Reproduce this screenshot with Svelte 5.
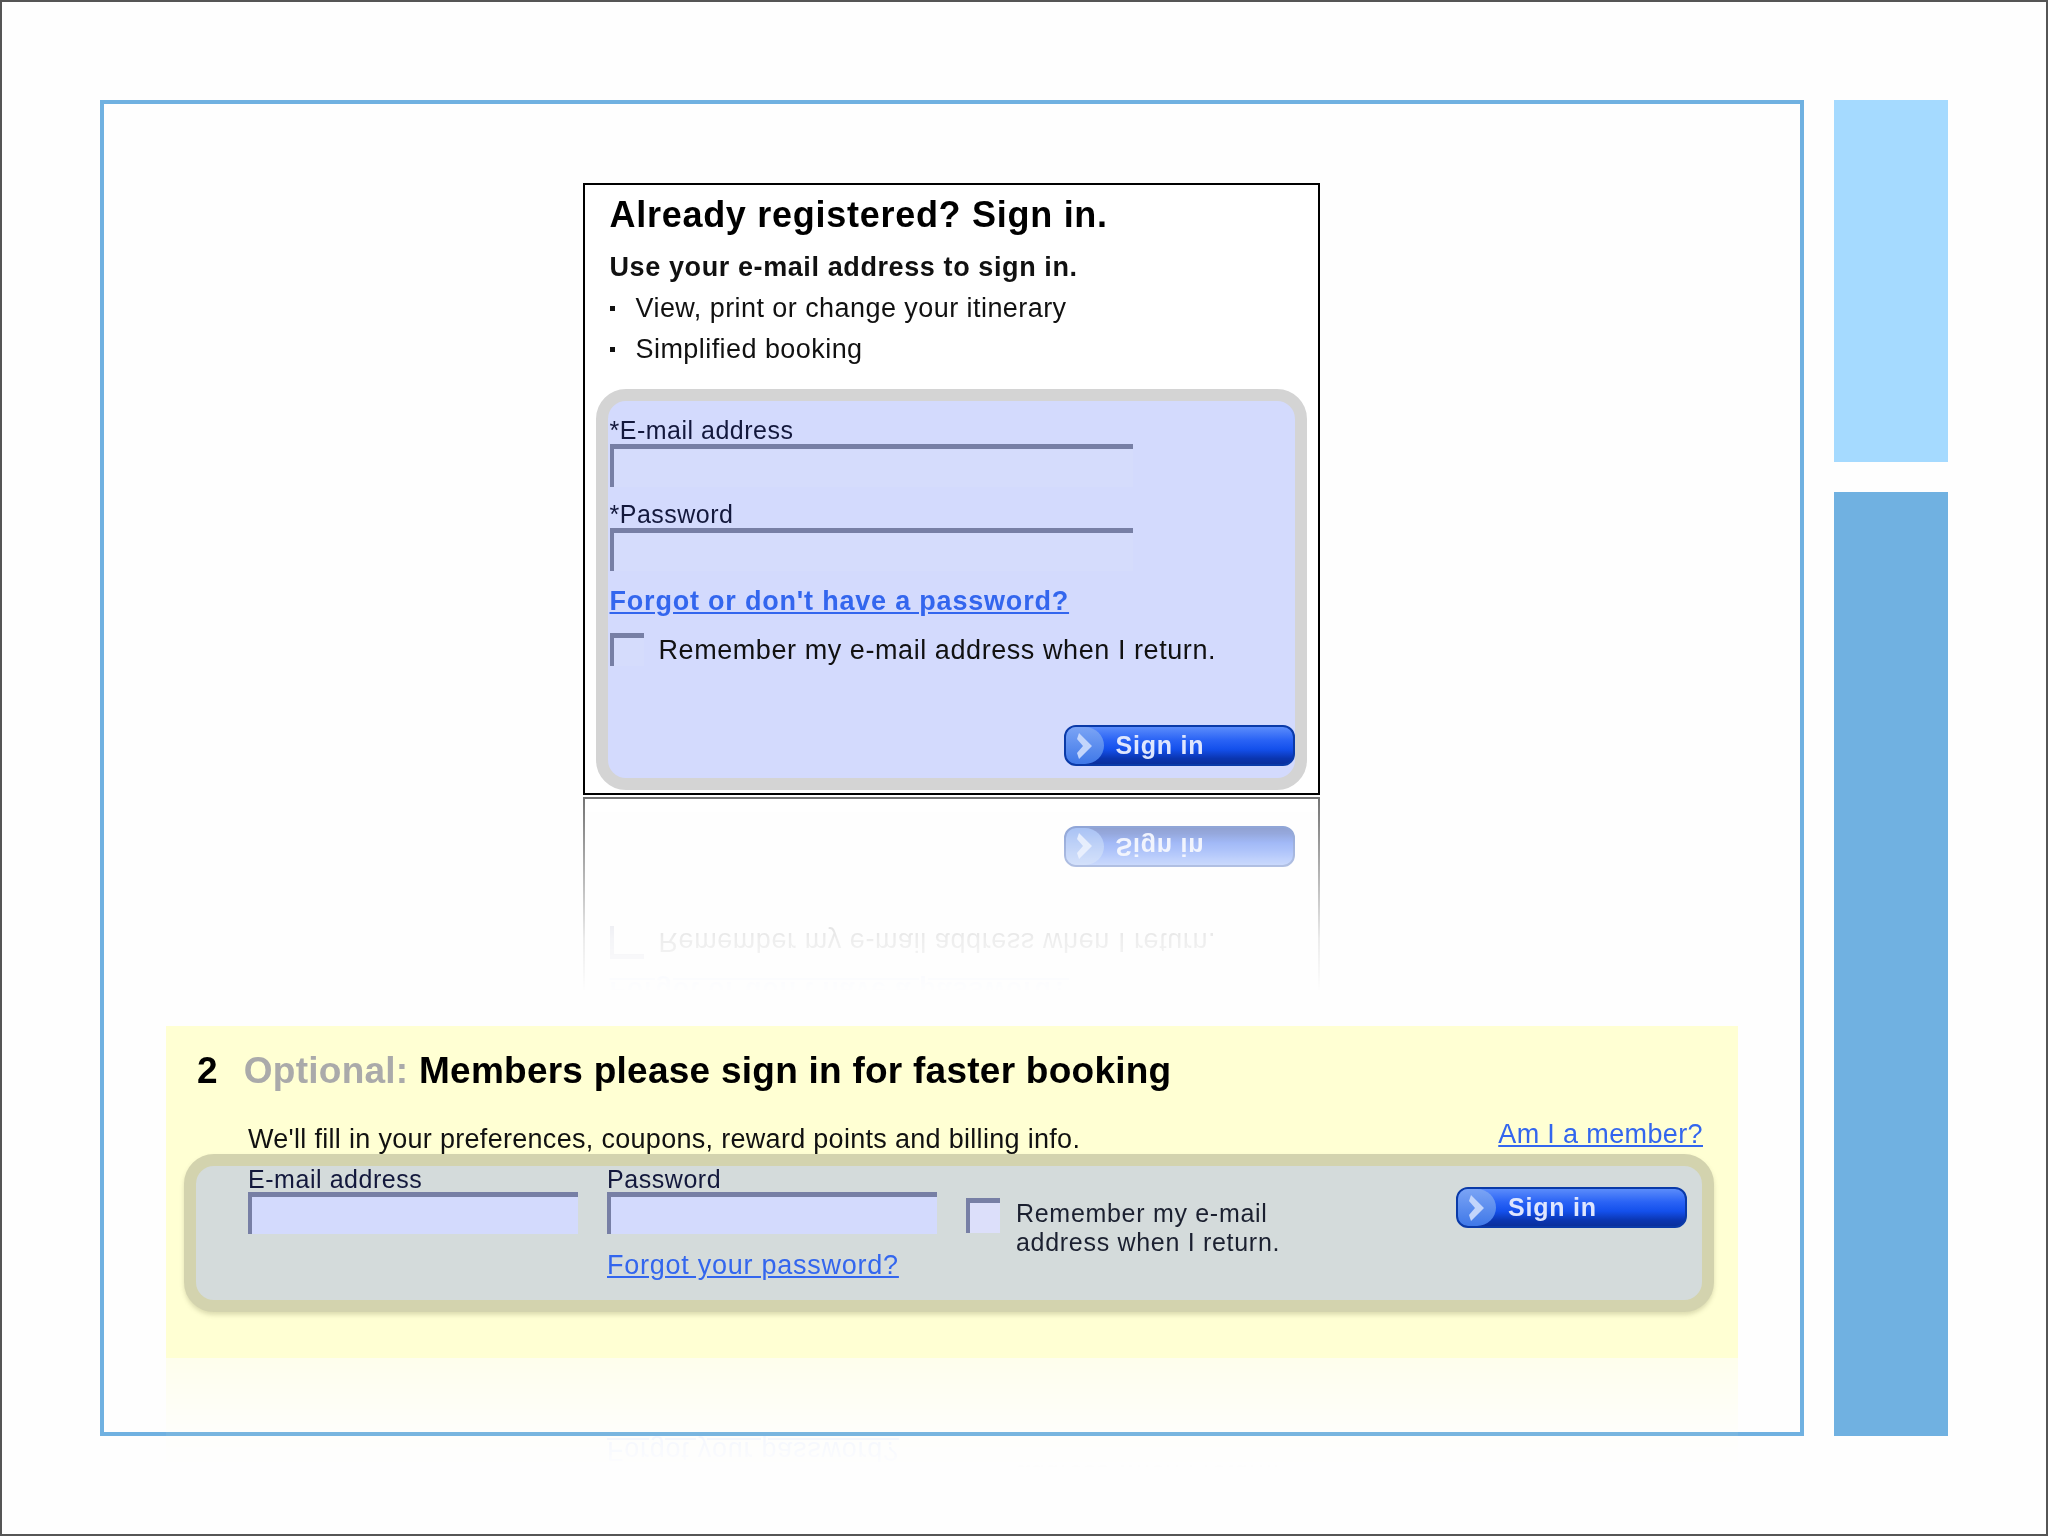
<script>
	const bullets = ['View, print or change your itinerary', 'Simplified booking'];
</script>

{#snippet signInButton()}
	<button class="sign-btn" type="button" tabindex="-1">
		<span class="chev">
			<svg width="20" height="30" viewBox="0 0 20 30">
				<path d="M4 2 L17 15 L4 28 L2 22 L8 15 L2 8 Z" fill="#c3d5fb" />
			</svg>
		</span>
		<span class="sign-label">Sign in</span>
	</button>
{/snippet}

{#snippet card()}
	<div class="card">
		<h2 class="card-title">Already registered? Sign in.</h2>
		<p class="card-sub">Use your e-mail address to sign in.</p>
		<ul class="perks">
			{#each bullets as item}
				<li><span class="dot"></span>{item}</li>
			{/each}
		</ul>
		<div class="card-panel">
			<div class="lbl">*E-mail address</div>
			<input class="field wide" type="text" tabindex="-1" />
			<div class="lbl second">*Password</div>
			<input class="field wide" type="text" tabindex="-1" />
			<a class="forgot-bold" href="#top">Forgot or don't have a password?</a>
			<label class="remember">
				<input class="check" type="checkbox" tabindex="-1" />
				<span>Remember my e-mail address when I return.</span>
			</label>
			<div class="btn-row">{@render signInButton()}</div>
		</div>
	</div>
{/snippet}

{#snippet member()}
	<section class="member">
		<h2 class="member-title">
			<span class="step">2</span>
			<span><span class="opt">Optional:</span> Members please sign in for faster booking</span>
		</h2>
		<div class="intro">
			<span>We'll fill in your preferences, coupons, reward points and billing info.</span>
			<a href="#top">Am I a member?</a>
		</div>
		<div class="member-panel">
			<div class="col">
				<div class="lbl">E-mail address</div>
				<input class="field short" type="text" tabindex="-1" />
			</div>
			<div class="col">
				<div class="lbl">Password</div>
				<input class="field short" type="text" tabindex="-1" />
				<a class="forgot" href="#top">Forgot your password?</a>
			</div>
			<label class="remember-small">
				<input class="check" type="checkbox" tabindex="-1" />
				<span>Remember my e-mail<br />address when I return.</span>
			</label>
			<div class="member-btn">{@render signInButton()}</div>
		</div>
	</section>
{/snippet}

<main class="page">
	<div class="frame">
		{@render card()}
		<div class="reflect card-reflect" aria-hidden="true">
			<div class="flip">{@render card()}</div>
		</div>
		{@render member()}
		<div class="reflect member-reflect" aria-hidden="true">
			<div class="flip">{@render member()}</div>
		</div>
	</div>
	<aside class="side">
		<div class="bar light"></div>
		<div class="bar dark"></div>
	</aside>
</main>

<style>
	:global(body) {
		margin: 0;
		background: #fefefe;
	}

	.page {
		width: 2048px;
		height: 1536px;
		box-sizing: border-box;
		border: 2px solid #555;
		padding: 98px 96px 0 98px;
		display: flex;
		gap: 30px;
		overflow: hidden;
		background: #fefefe;
		font-family: 'Liberation Sans', Arial, sans-serif;
		color: #111;
	}

	.frame {
		width: 1704px;
		height: 1336px;
		box-sizing: border-box;
		border: 4px solid #70b1e1;
		padding-top: 79px;
		display: flex;
		flex-direction: column;
		align-items: center;
		flex: none;
	}

	.side {
		width: 114px;
		height: 1336px;
		display: flex;
		flex-direction: column;
		gap: 30px;
		flex: none;
	}

	.bar.light {
		height: 362px;
		background: #a5daff;
	}

	.bar.dark {
		flex: 1;
		background: #70b1e1;
	}

	/* sign in card */
	.card {
		width: 737px;
		height: 612px;
		box-sizing: border-box;
		border: 2px solid #000;
		margin-right: 2px;
		background: #fff;
		padding: 8px 11px 3px 11px;
		flex: none;
		display: flex;
		flex-direction: column;
		filter: blur(0.7px);
	}

	.card-title {
		margin: 0 0 0 14px;
		font-size: 36px;
		line-height: 44px;
		font-weight: 700;
		letter-spacing: 0.72px;
		color: #000;
	}

	.card-sub {
		margin: 14px 0 0 14px;
		font-size: 27px;
		line-height: 33px;
		font-weight: 700;
		letter-spacing: 0.6px;
	}

	.perks {
		list-style: none;
		margin: 4px 0 0 14px;
		padding: 0;
		font-size: 27px;
		line-height: 41px;
		letter-spacing: 0.44px;
	}

	.perks li {
		display: flex;
		align-items: center;
	}

	.dot {
		width: 5px;
		height: 5px;
		background: #111;
		margin-right: 21px;
	}

	.card-panel {
		flex: 1;
		margin-top: 19px;
		box-sizing: border-box;
		border: 12px solid #d4d4d4;
		border-radius: 30px;
		background: #d3dafd;
		padding: 15px 0 0 2px;
		display: flex;
		flex-direction: column;
		align-items: flex-start;
	}

	.lbl {
		font-size: 25px;
		line-height: 28px;
		letter-spacing: 0.5px;
		color: #13183c;
	}

	.lbl.second {
		margin-top: 13px;
	}

	.field {
		box-sizing: border-box;
		display: block;
		margin: 0;
		padding: 0;
		border: none;
		border-top: 5px solid #777fa5;
		border-left: 4px solid #777fa5;
		border-radius: 0;
		background: #d3dafd;
		outline: none;
	}

	.field.wide {
		width: 523px;
		height: 43px;
		background: #d5dcfc;
	}

	.field.short {
		width: 330px;
		height: 42px;
	}

	.forgot-bold {
		margin-top: 14px;
		font-size: 27px;
		line-height: 32px;
		font-weight: 700;
		letter-spacing: 0.8px;
		color: #3366ee;
	}

	.remember {
		display: flex;
		align-items: flex-start;
		gap: 15px;
		margin-top: 16px;
		font-size: 27px;
		line-height: 34px;
		letter-spacing: 0.57px;
	}

	.check {
		appearance: none;
		box-sizing: border-box;
		width: 34px;
		height: 33px;
		margin: 0;
		border: none;
		border-top: 5px solid #777fa5;
		border-left: 4px solid #777fa5;
		background: #d5dcfc;
		flex: none;
	}

	.btn-row {
		margin-top: auto;
		margin-bottom: 12px;
		align-self: flex-end;
	}

	.sign-btn {
		width: 231px;
		height: 41px;
		box-sizing: border-box;
		padding: 0;
		display: flex;
		align-items: center;
		border: 2px solid #0a3aa8;
		border-radius: 12px;
		overflow: hidden;
		background: linear-gradient(#5b8cfb 0%, #2a63f5 35%, #1450ec 60%, #0a35b0 85%, #0a2f9c 100%);
		font-family: inherit;
	}

	.chev {
		width: 38px;
		height: 100%;
		display: flex;
		align-items: center;
		justify-content: center;
		background: linear-gradient(#7ba4f5, #3f78e8);
		border-radius: 0 50% 50% 0;
		flex: none;
	}

	.sign-label {
		margin-left: 12px;
		font-size: 25px;
		font-weight: 700;
		letter-spacing: 0.8px;
		color: #dfe6fd;
	}

	/* reflections: the rounded panels don't show in them, only their contents */
	.reflect {
		overflow: hidden;
		flex: none;
	}

	.flip {
		transform: scaleY(-1);
	}

	.card-reflect {
		height: 229px;
		margin-top: 2px;
		mask-image: linear-gradient(rgba(0, 0, 0, 0.55), rgba(0, 0, 0, 0.07) 62%, transparent 85%);
	}

	.card-reflect .flip {
		height: 612px;
	}

	.card-reflect .card-panel {
		border-color: transparent;
		background: transparent;
	}

	.card-reflect .field,
	.card-reflect .check {
		background: transparent;
	}

	.member-reflect {
		height: 130px;
		mask-image: linear-gradient(rgba(0, 0, 0, 0.4), rgba(0, 0, 0, 0.05) 60%, transparent 85%);
	}

	.member-reflect .flip {
		height: 332px;
	}

	.member-reflect .member-panel {
		border-color: transparent;
		background: transparent;
		box-shadow: none;
	}

	.member-reflect .field,
	.member-reflect .check {
		background: transparent;
	}

	/* member block */
	.member {
		width: 1572px;
		height: 332px;
		box-sizing: border-box;
		background: #ffffd3;
		padding-top: 23px;
		flex: none;
		filter: blur(0.7px);
	}

	.member-title {
		margin: 0;
		padding-left: 31px;
		display: flex;
		gap: 26px;
		font-size: 37px;
		line-height: 44px;
		font-weight: 700;
		letter-spacing: 0.25px;
		color: #000;
	}

	.opt {
		color: #aaa;
	}

	.intro {
		display: flex;
		justify-content: space-between;
		align-items: flex-start;
		margin-top: 29px;
		padding: 0 35px 0 82px;
		font-size: 27px;
		line-height: 34px;
		letter-spacing: 0.3px;
	}

	.intro a {
		margin-top: -5px;
		letter-spacing: 0.37px;
	}

	.intro a,
	.forgot {
		color: #3366ee;
	}

	.member-panel {
		height: 158px;
		box-sizing: border-box;
		margin: -2px 24px 0 18px;
		border: 12px solid #d3d3ae;
		border-radius: 30px;
		background: #d4dbdb;
		box-shadow: 0 3px 4px rgba(120, 120, 80, 0.25);
		display: flex;
		padding-left: 52px;
	}

	.col {
		width: 330px;
		margin-right: 29px;
	}

	.col .lbl {
		line-height: 26px;
		letter-spacing: 0.55px;
	}

	.forgot {
		display: inline-block;
		margin-top: 15px;
		font-size: 27px;
		line-height: 32px;
		letter-spacing: 0.75px;
	}

	.remember-small {
		display: flex;
		gap: 16px;
		align-items: flex-start;
		padding-top: 32px;
		font-size: 25px;
		line-height: 29px;
		letter-spacing: 0.7px;
		color: #1b2030;
	}

	.remember-small .check {
		height: 35px;
		background: #dcdffa;
	}

	.remember-small span {
		padding-top: 1px;
	}

	.member-btn {
		margin-left: auto;
		margin-right: 15px;
		padding-top: 21px;
	}
</style>
